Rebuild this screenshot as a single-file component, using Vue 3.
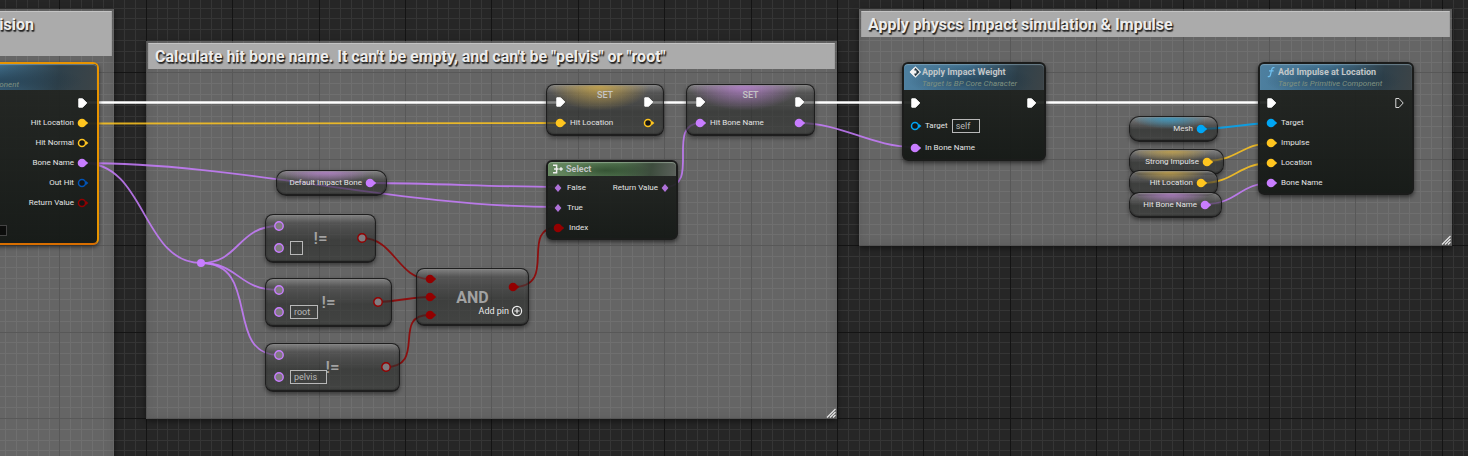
<script setup>
import { computed, onBeforeUnmount, onMounted, ref } from 'vue'

const viewWidth = ref(window.innerWidth)
const viewHeight = ref(window.innerHeight)
const onResize = () => {
  viewWidth.value = window.innerWidth
  viewHeight.value = window.innerHeight
}
onMounted(() => window.addEventListener('resize', onResize))
onBeforeUnmount(() => window.removeEventListener('resize', onResize))

// Ten grid cells span 108 pixels; every eighth line is a major one.
const gridLines = (length, origin) => {
  const lines = []
  for (let n = 0; ; n++) {
    const at = Math.round(origin + (n * 108) / 10)
    if (at > length) return lines
    lines.push({ at, major: n % 8 === 0 })
  }
}
const columns = computed(() => gridLines(viewWidth.value, -27))
const rows = computed(() => gridLines(viewHeight.value, -14))
const gridPath = (major) =>
  columns.value.filter((l) => l.major === major).map((l) => `M${l.at} 0h1V${viewHeight.value}h-1z`).join('') +
  rows.value.filter((l) => l.major === major).map((l) => `M0 ${l.at}H${viewWidth.value}v1H0z`).join('')

const wires = [
  { kind: 'exec', d: 'M84 102.5H560' },
  { kind: 'exec', d: 'M648 102.5H701' },
  { kind: 'exec', d: 'M800 102.5H915' },
  { kind: 'exec', d: 'M1032 102.5H1272' },
  { kind: 'vector', d: 'M82 123.5L560 123' },
  { kind: 'name', d: 'M84 163C240 163 398 207 558 207' },
  { kind: 'name', d: 'M84 163C146 163 142 263 201 263' },
  { kind: 'name', d: 'M370 183C430 183 500 187 558 187' },
  { kind: 'name', d: 'M201 263C240 263 237 226 279 226' },
  { kind: 'name', d: 'M201 263C240 263 237 290 279 290' },
  { kind: 'name', d: 'M201 263C262 263 223 355 279 355' },
  { kind: 'name', d: 'M665 187C702 187 664 123 701 123' },
  { kind: 'name', d: 'M799 123C842 123 872 147 914 147' },
  { kind: 'bool', d: 'M362 238C394 238 398 279 429 279' },
  { kind: 'bool', d: 'M377 302C396 302 410 297 429 297' },
  { kind: 'bool', d: 'M385 367C428 367 391 315 429 315' },
  { kind: 'bool', d: 'M513 287C560 287 517 227 559 227' },
  { kind: 'object', d: 'M1201 129C1226 129 1247 123 1272 123' },
  { kind: 'vector', d: 'M1207 161C1237 161 1242 143 1272 143' },
  { kind: 'vector', d: 'M1201 183C1236 183 1237 163 1272 163' },
  { kind: 'name', d: 'M1205 204C1238 204 1239 183 1272 183' },
]

const comments = [
  { id: 'collision', title: 'Collision' },
  { id: 'bone', title: 'Calculate hit bone name. It can\'t be empty, and can\'t be "pelvis" or "root"' },
  { id: 'impulse', title: 'Apply physcs impact simulation & Impulse' },
]

const variables = [
  { id: 'default-bone', label: 'Default Impact Bone', kind: 'name' },
  { id: 'mesh', label: 'Mesh', kind: 'object' },
  { id: 'strong', label: 'Strong Impulse', kind: 'vector' },
  { id: 'hit-location', label: 'Hit Location', kind: 'vector' },
  { id: 'hit-bone', label: 'Hit Bone Name', kind: 'name' },
]

const setters = [
  { id: 'set-location', label: 'Hit Location', kind: 'vector', out: 'ring' },
  { id: 'set-bone', label: 'Hit Bone Name', kind: 'name', out: 'dot' },
]

const traceOutputs = [
  { label: 'Hit Location', kind: 'vector', shape: 'dot' },
  { label: 'Hit Normal', kind: 'vector', shape: 'ring' },
  { label: 'Bone Name', kind: 'name', shape: 'dot' },
  { label: 'Out Hit', kind: 'struct', shape: 'ring' },
  { label: 'Return Value', kind: 'bool', shape: 'ring' },
]

const impulseInputs = [
  { label: 'Target', kind: 'object' },
  { label: 'Impulse', kind: 'vector' },
  { label: 'Location', kind: 'vector' },
  { label: 'Bone Name', kind: 'name' },
]

const comparisons = ref([
  { id: 'not-empty', value: '' },
  { id: 'not-root', value: 'root' },
  { id: 'not-pelvis', value: 'pelvis' },
])
const self = ref('self')
const traceValue = ref('')
</script>

<template>
  <main class="graph">
    <svg class="defs" aria-hidden="true">
      <symbol id="pin-dot" viewBox="0 0 14 12">
        <circle cx="6" cy="6" r="4.3" fill="currentColor" />
        <path d="M9.6 3.8L12.2 6L9.6 8.2z" fill="currentColor" />
      </symbol>
      <symbol id="pin-ring" viewBox="0 0 14 12">
        <circle cx="6" cy="6" r="3.5" fill="#151515" stroke="currentColor" stroke-width="1.5" />
        <path d="M10 4L12.4 6L10 8z" fill="currentColor" />
      </symbol>
      <symbol id="pin-math" viewBox="0 0 14 12">
        <circle cx="6" cy="6" r="4.2" fill="#807c80" stroke="currentColor" stroke-width="1.4" />
      </symbol>
      <symbol id="pin-diamond" viewBox="0 0 14 12">
        <path d="M6 2L9.4 6L6 10L2.6 6z" fill="currentColor" />
      </symbol>
      <symbol id="pin-exec" viewBox="0 0 14 12">
        <path d="M2.8 1.8H6.6L10.8 6L6.6 10.2H2.8z" fill="currentColor" stroke="currentColor" stroke-linejoin="round" />
      </symbol>
      <symbol id="pin-exec-open" viewBox="0 0 14 12">
        <path d="M2.8 1.5H6L10.2 6L6 10.5H2.8z" fill="none" stroke="#d8d8d8" stroke-linejoin="round" />
      </symbol>
    </svg>

    <svg class="grid" aria-hidden="true">
      <path class="grid-minor" :d="gridPath(false)" />
      <path class="grid-major" :d="gridPath(true)" />
    </svg>

    <section v-for="c in comments" :key="c.id" class="comment" :class="c.id">
      <h2>{{ c.title }}</h2>
      <svg class="grip" viewBox="0 0 10 10" aria-hidden="true">
        <path d="M1 9.5L9.5 1M4 9.5L9.5 4M7 9.5L9.5 7" />
      </svg>
    </section>

    <svg class="wires" aria-hidden="true">
      <path v-for="w in wires" :key="w.d" :d="w.d" :class="w.kind" />
      <circle class="name knot" cx="201" cy="263" r="4" />
    </svg>

    <article class="node solid trace selected">
      <header class="blue"><p class="subtitle">Target is Primitive Component</p></header>
      <div class="outputs">
        <div class="pin right"><svg class="exec"><use href="#pin-exec" /></svg></div>
        <div v-for="o in traceOutputs" :key="o.label" class="pin right">
          <span>{{ o.label }}</span>
          <svg :class="o.kind"><use :href="`#pin-${o.shape}`" /></svg>
        </div>
      </div>
      <input v-model="traceValue" class="dark-field" type="text" aria-label="Draw time" />
    </article>

    <article v-for="s in setters" :key="s.id" class="node glass setter" :class="[s.id, s.kind]">
      <div class="set-row">
        <svg class="exec"><use href="#pin-exec" /></svg>
        <h3>SET</h3>
        <svg class="exec"><use href="#pin-exec" /></svg>
      </div>
      <div class="value-row">
        <div class="pin"><svg :class="s.kind"><use href="#pin-dot" /></svg><span>{{ s.label }}</span></div>
        <svg :class="s.kind"><use :href="`#pin-${s.out}`" /></svg>
      </div>
    </article>

    <article class="node solid select-node">
      <header class="green">
        <svg class="title-icon" viewBox="0 0 12 12" aria-hidden="true">
          <path d="M1 2.2H4.6V9.8H1M2 6H6.6M9 4.2V7.8M7.2 6H10.8" fill="none" stroke="#eee" stroke-width="1.5" />
        </svg>
        <h3>Select</h3>
      </header>
      <div class="select-body">
        <div class="pin"><svg class="name soft"><use href="#pin-diamond" /></svg><span>False</span></div>
        <div class="pin right"><span>Return Value</span><svg class="name soft"><use href="#pin-diamond" /></svg></div>
        <div class="pin"><svg class="name soft"><use href="#pin-diamond" /></svg><span>True</span></div>
        <div class="pin index"><svg class="bool"><use href="#pin-dot" /></svg><span>Index</span></div>
      </div>
    </article>

    <article v-for="v in variables" :key="v.id" class="node glass variable" :class="[v.id, v.kind]">
      <span>{{ v.label }}</span>
      <svg :class="v.kind"><use href="#pin-dot" /></svg>
    </article>

    <article v-for="c in comparisons" :key="c.id" class="node glass compact" :class="c.id">
      <div class="operator">!=</div>
      <div class="compact-body">
        <div class="compact-inputs">
          <div class="pin"><svg class="name"><use href="#pin-math" /></svg></div>
          <div class="pin">
            <svg class="name"><use href="#pin-math" /></svg>
            <input v-model="c.value" class="field" type="text" aria-label="Compared name" />
          </div>
        </div>
        <svg class="bool"><use href="#pin-math" /></svg>
      </div>
    </article>

    <article class="node glass compact and-node">
      <div class="operator and-title">AND</div>
      <div class="compact-body">
        <div class="and-inputs">
          <svg v-for="n in 3" :key="n" class="bool"><use href="#pin-dot" /></svg>
        </div>
        <div class="and-right">
          <svg class="bool"><use href="#pin-dot" /></svg>
          <button type="button" class="add-pin">
            Add pin
            <svg viewBox="0 0 12 12" aria-hidden="true">
              <circle cx="6" cy="6" r="4.6" /><path d="M6 3.4V8.6M3.4 6H8.6" />
            </svg>
          </button>
        </div>
      </div>
    </article>

    <article class="node solid apply">
      <header class="blue">
        <svg class="title-icon" viewBox="0 0 14 12" aria-hidden="true">
          <path d="M7.5 1.2L12.3 6L7.5 10.8L2.7 6z" fill="#24353f" stroke="#e8e8e8" stroke-width="1.2" />
          <path d="M1.6 6L6.4 1.2V4.6H8.4V7.4H6.4V10.8z" fill="#f2f2f2" />
        </svg>
        <div>
          <h3>Apply Impact Weight</h3>
          <p class="subtitle">Target is BP Core Character</p>
        </div>
      </header>
      <div class="rows">
        <div class="exec-row">
          <svg class="exec"><use href="#pin-exec" /></svg>
          <svg class="exec"><use href="#pin-exec" /></svg>
        </div>
        <div class="pin">
          <svg class="object"><use href="#pin-ring" /></svg>
          <label for="target-self">Target</label>
          <input id="target-self" v-model="self" class="field" type="text" />
        </div>
        <div class="pin"><svg class="name"><use href="#pin-dot" /></svg><span>In Bone Name</span></div>
      </div>
    </article>

    <article class="node solid add-impulse">
      <header class="blue">
        <svg class="title-icon" viewBox="0 0 14 12" aria-hidden="true">
          <path d="M10.5 1.8C8.6 1 8 2.4 7.6 4L6.4 9C6 10.6 5 11 3.8 10.4M5 4.8H9.6" fill="none" stroke="#6fc0f0" stroke-width="1.2" />
        </svg>
        <div>
          <h3>Add Impulse at Location</h3>
          <p class="subtitle">Target is Primitive Component</p>
        </div>
      </header>
      <div class="rows">
        <div class="exec-row">
          <svg class="exec"><use href="#pin-exec" /></svg>
          <svg><use href="#pin-exec-open" /></svg>
        </div>
        <div v-for="i in impulseInputs" :key="i.label" class="pin">
          <svg :class="i.kind"><use href="#pin-dot" /></svg><span>{{ i.label }}</span>
        </div>
      </div>
    </article>
  </main>
</template>

<style>
body {
  background: #262626;
}
</style>

<style scoped>
.graph {
  position: relative;
  height: 100vh;
  overflow: hidden;
  background: #262626;
  color: #e4e4e4;
  font: 8px/12px Roboto, "Liberation Sans", sans-serif;
}
.graph * { box-sizing: border-box; }
.defs { position: absolute; width: 0; height: 0; }
.grid, .wires { position: absolute; inset: 0; width: 100%; height: 100%; }
.grid-minor { fill: #353535; }
.grid-major { fill: #141414; }
h2, h3, p { margin: 0; }

.exec { color: #fff; }
.vector { --pin: #ffc51f; }
.name { --pin: #c87dff; }
.bool { --pin: #930000; }
.object { --pin: #00a6f5; }
.struct { --pin: #0055b8; }
svg.vector, svg.name, svg.bool, svg.object, svg.struct { color: var(--pin); }
svg.soft { color: #ae71d8; }

/* Comment frames */
.comment {
  position: absolute;
  padding: 2px;
  background: rgba(255, 255, 255, .29);
  box-shadow: 0 2px 6px rgba(0, 0, 0, .5), inset 0 0 10px rgba(70, 70, 70, .35);
}
.comment h2 {
  min-height: 26px;
  padding: 1px 6px 0;
  background: #ababab;
  border: solid #a0a0a0;
  border-width: 1px 1px 0;
  border-top-color: #c4c4c4;
  color: #ededed;
  font-size: 16px;
  font-weight: 700;
  line-height: 24px;
  white-space: nowrap;
  text-shadow: 1px 1px 1px #222, 1px 2px 1px #444;
}
.collision { left: -326px; top: 9px; width: 440px; height: 600px; }
.collision h2 { min-height: 45px; text-align: right; padding-right: 77px; }
.bone { left: 146px; top: 41px; width: 691px; height: 378px; }
.impulse { left: 859px; top: 9px; width: 593px; height: 237px; }
.grip { position: absolute; right: 1px; bottom: 1px; width: 10px; height: 10px; }
.grip path { stroke: #e6e6e6; fill: none; stroke-width: 1.2; }

/* Wires */
.wires path { fill: none; stroke: var(--pin); stroke-width: 1.8; opacity: .85; }
.wires path.exec { stroke: #fff; stroke-width: 2.6; opacity: 1; }
.wires .knot { fill: var(--pin); }

/* Nodes */
.node {
  position: absolute;
  border: 2px solid #1b1c1b;
  border-radius: 6px;
  box-shadow: 0 2px 4px rgba(0, 0, 0, .55);
}
.node svg { flex: none; display: block; width: 14px; height: 12px; }
.solid { background: linear-gradient(rgba(32, 35, 32, .92), rgba(20, 24, 21, .95)); }
.glass {
  border-color: rgba(22, 22, 22, .9);
  border-width: 1px 1px 2px;
  border-radius: 8px;
  background:
    radial-gradient(ellipse 44% 52% at 45% 0, var(--glow, transparent), transparent),
    linear-gradient(rgba(150, 150, 150, .6), rgba(72, 72, 72, .6) 8px, rgba(38, 40, 38, .62) 55%, rgba(45, 47, 45, .62));
  background-clip: padding-box;
  box-shadow: 0 2px 4px rgba(0, 0, 0, .45), inset 0 0 2px rgba(0, 0, 0, .6), inset 0 1px 1px rgba(200, 200, 200, .45);
}
.glass.vector { --glow: rgba(205, 168, 70, .85); }
.glass.name { --glow: rgba(185, 128, 210, .85); }
.glass.object { --glow: rgba(50, 155, 200, .9); }
h3 { color: #c3c6c8; font-size: 9px; font-weight: 700; line-height: 12px; white-space: nowrap; }
.subtitle { color: #7f9180; font-size: 8px; font-style: italic; line-height: 11px; white-space: nowrap; }
header {
  display: flex;
  height: 26px;
  padding: 2px 4px;
  border-radius: 4px 4px 0 0;
}
.blue {
  background:
    radial-gradient(ellipse 45% 60% at 48% 65%, rgba(20, 40, 55, .5), transparent),
    linear-gradient(100deg, #4e80a0, #41708e 45%, #2f414b 80%, #3d4447);
  box-shadow: inset 0 1px 1px rgba(160, 190, 205, .5);
}
header.green {
  align-items: center;
  gap: 2px;
  height: 14px;
  padding: 0 4px;
  background:
    radial-gradient(ellipse 35% 60% at 45% 60%, rgba(25, 50, 25, .5), transparent),
    linear-gradient(100deg, #66885f, #50724e 55%, #3d4c3d 80%, #5b615b);
  box-shadow: inset 0 1px 1px rgba(190, 210, 190, .5);
}
.green .title-icon { width: 12px; }
.pin { display: flex; align-items: center; gap: 2px; height: 20px; white-space: nowrap; }
.right { justify-content: flex-end; }
.rows { padding: 3px 5px 0; }
.exec-row { display: flex; justify-content: space-between; align-items: center; height: 20px; }

.field {
  width: 28px;
  height: 14px;
  padding: 0 3px;
  border: 1px solid #b8b8b8;
  border-radius: 0;
  background: transparent;
  color: #b8b8b8;
  font: 9px/12px Roboto, "Liberation Sans", sans-serif;
}

.trace { left: -101px; top: 62px; width: 200px; height: 183px; }
.selected { border-color: #e89400; border-bottom-color: #d86e00; }
.trace header { justify-content: flex-end; align-items: flex-end; padding: 0 78px 0 0; }
.trace .outputs { padding: 3px 7px 0 0; }
.dark-field { display: block; width: 40px; height: 11px; margin: 12px 0 0 66px; background: #0c0d0c; border: 1px solid #444; }

.setter { top: 84px; height: 52px; padding: 0 7px; }
.set-location { left: 546px; width: 118px; }
.set-bone { left: 686px; width: 129px; }
.set-row { display: flex; justify-content: space-between; align-items: center; height: 34px; }
.set-row h3 { align-self: flex-start; margin-top: 4px; color: #c4c4c4; font-weight: 500; }
.value-row { display: flex; justify-content: space-between; align-items: center; height: 8px; }

.select-node { left: 546px; top: 160px; width: 132px; height: 80px; }
.select-body { display: grid; grid-template-columns: auto auto; padding: 2px 3px 0 4px; }
.select-body .pin { gap: 1px; }
.select-body .index { grid-column: 1; gap: 3px; }

.variable { display: flex; align-items: center; justify-content: flex-end; gap: 2px; height: 26px; padding-right: 8px; border-radius: 10px; white-space: nowrap; }
.default-bone { left: 276px; top: 170px; width: 111px; }
.mesh { left: 1129px; top: 116px; width: 89px; }
.strong { left: 1129px; top: 149px; width: 95px; }
.hit-location { left: 1129px; top: 170px; width: 89px; }
.hit-bone { left: 1129px; top: 192px; width: 93px; }

.compact { display: grid; height: 49px; }
.operator { grid-area: 1 / 1; place-self: center; color: #a2a2a2; font-size: 17px; font-weight: 500; line-height: 20px; }
.compact-body { grid-area: 1 / 1; display: flex; justify-content: space-between; align-items: center; padding: 0 5px 0 7px; }
.compact-inputs { padding-bottom: 2px; }
.compact-inputs .pin { height: 22px; gap: 3px; }
.not-empty { left: 265px; top: 214px; width: 111px; }
.not-root { left: 265px; top: 278px; width: 127px; }
.not-pelvis { left: 265px; top: 343px; width: 135px; }
.not-empty .field { width: 13px; }
.not-pelvis .field { width: 37px; }
.and-node { left: 416px; top: 268px; width: 113px; height: 58px; }
.and-title { padding-top: 2px; font-size: 16px; font-weight: 700; }
.and-inputs { display: grid; gap: 6px; }
.and-right { display: flex; flex-direction: column; align-items: flex-end; gap: 12px; padding-top: 4px; }
.and-right > svg { margin-right: 2px; }
.add-pin {
  display: flex;
  align-items: center;
  gap: 2px;
  padding: 0;
  border: 0;
  background: none;
  color: #e8e8e8;
  font: 9px/12px Roboto, "Liberation Sans", sans-serif;
}
.add-pin svg { width: 12px; fill: none; stroke: #eee; stroke-width: 1.2; }

.apply { left: 902px; top: 62px; width: 144px; }
.apply .exec-row { margin-bottom: 2px; }
.apply .pin { height: 22px; }
.apply label { margin-right: 2px; }
.add-impulse { left: 1258px; top: 62px; width: 156px; }
</style>
